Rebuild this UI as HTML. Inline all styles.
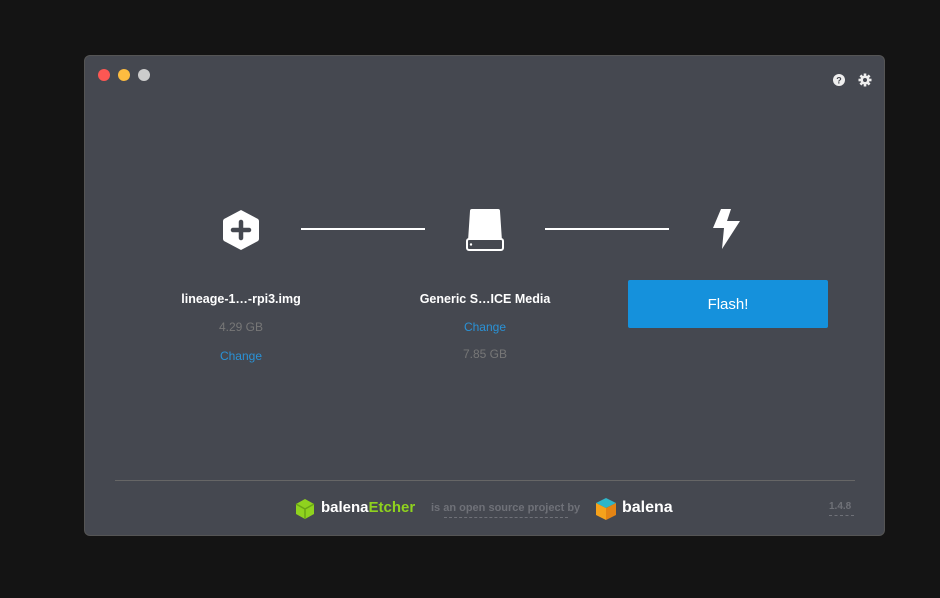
<!DOCTYPE html>
<html><head><meta charset="utf-8"><style>
body{margin:0;width:940px;height:598px;background:#141414;font-family:"Liberation Sans",sans-serif;position:relative;overflow:hidden}
.win{position:absolute;left:85px;top:56px;width:799px;height:479px;background:#454850;border-radius:5px;box-shadow:0 0 0 1px #555}
.dot{position:absolute;top:13px;width:12px;height:12px;border-radius:50%}
.a{position:absolute;color:#fff;font-size:12.5px;font-weight:bold;text-align:center}
.g{position:absolute;color:#777;font-size:12px;text-align:center}
.c{position:absolute;color:#2a92d6;font-size:12px;text-align:center}
.line{position:absolute;height:2px;background:#fff;top:172px}
</style></head><body>
<div class="win">
<div class="dot" style="left:13px;background:#fc5753"></div>
<div class="dot" style="left:33px;background:#fdbc40"></div>
<div class="dot" style="left:53px;background:#ccc"></div>
<svg style="position:absolute;left:747px;top:17px" width="14" height="14" viewBox="0 0 14 14"><circle cx="7" cy="7" r="6" fill="#eee"/><text x="7" y="10.5" font-size="9" font-weight="bold" text-anchor="middle" fill="#454850" font-family="Liberation Sans">?</text></svg>
<svg style="position:absolute;left:773px;top:17px" width="14" height="14" viewBox="0 0 14 14"><g fill="#eee"><circle cx="7" cy="7" r="4.5"/><rect x="5.7" y="0.5" width="2.6" height="13"/><rect x="0.5" y="5.7" width="13" height="2.6"/><rect x="5.7" y="0.5" width="2.6" height="13" transform="rotate(45 7 7)"/><rect x="5.7" y="0.5" width="2.6" height="13" transform="rotate(-45 7 7)"/></g><circle cx="7" cy="7" r="2" fill="#454850"/></svg>
<svg style="position:absolute;left:137px;top:153px" width="38" height="42" viewBox="0 0 38 42"><path d="M19 1 L36 10 Q37 11 37 12 L37 30 Q37 31 36 32 L19 41 L2 32 Q1 31 1 30 L1 12 Q1 11 2 10 Z" fill="#fff"/><path d="M19 13 V29 M11 21 H27" stroke="#454850" stroke-width="4.5" stroke-linecap="round"/></svg>
<div class="line" style="left:216px;width:124px"></div>
<svg style="position:absolute;left:380px;top:153px" width="40" height="42" viewBox="0 0 40 42"><path d="M5 2 Q5 0 7 0 L33 0 Q35 0 35 2 L37 32 L3 32 Z" fill="#fff"/><rect x="2" y="30" width="36" height="11" rx="2" fill="#454850" stroke="#fff" stroke-width="2"/><circle cx="6" cy="35.5" r="1.2" fill="#fff"/></svg>
<div class="line" style="left:460px;width:124px"></div>
<svg style="position:absolute;left:626px;top:152px" width="30" height="42" viewBox="0 0 30 42"><path d="M10 1 L20 1 L16 13 L29 13 L11 41 L13 20 L2 20 Z" fill="#fff"/></svg>
<div class="a" style="left:56px;width:200px;top:236px">lineage-1…-rpi3.img</div>
<div class="g" style="left:56px;width:200px;top:264px">4.29 GB</div>
<div class="c" style="left:56px;width:200px;top:293px">Change</div>
<div class="a" style="left:300px;width:200px;top:236px">Generic S…ICE Media</div>
<div class="c" style="left:300px;width:200px;top:264px">Change</div>
<div class="g" style="left:300px;width:200px;top:291px">7.85 GB</div>
<div style="position:absolute;left:543px;top:224px;width:200px;height:48px;background:#1591dc;border-radius:2px;color:#fff;font-size:15px;text-align:center;line-height:50px">Flash!</div>
<div style="position:absolute;left:30px;top:424px;width:740px;height:1px;background:#666"></div>
<svg style="position:absolute;left:210px;top:442px" width="20" height="22" viewBox="0 0 20 22"><path d="M10 1 L19 6 L19 16 L10 21 L1 16 L1 6 Z" fill="#8fd21e"/><path d="M1 6 L10 11 L19 6 M10 11 V21" stroke="#6aa515" stroke-width="1.5" fill="none"/></svg>
<div style="position:absolute;left:236px;top:443px;font-size:15px;font-weight:bold;color:#fff">balena<span style="color:#8fd21e">Etcher</span></div>
<div style="position:absolute;left:346px;top:446px;font-size:11px;font-weight:bold;color:#6f7178">is an open source project by</div>
<div style="position:absolute;left:359px;top:461px;width:124px;border-top:1px dashed #6f7178"></div>
<svg style="position:absolute;left:510px;top:441px" width="22" height="24" viewBox="0 0 22 24"><path d="M11 1 L21 6 L11 11 L1 6 Z" fill="#2fb6c9"/><path d="M1 6 L11 11 L11 23 L1 18 Z" fill="#f6a21b"/><path d="M21 6 L11 11 L11 23 L21 18 Z" fill="#e48414"/></svg>
<div style="position:absolute;left:537px;top:443px;font-size:16px;font-weight:bold;color:#fff">balena</div>
<div style="position:absolute;left:744px;top:445px;font-size:10px;font-weight:bold;color:#6f7178">1.4.8</div>
<div style="position:absolute;left:744px;top:459px;width:25px;border-top:1px dashed #6f7178"></div>
</div>
</body></html>
